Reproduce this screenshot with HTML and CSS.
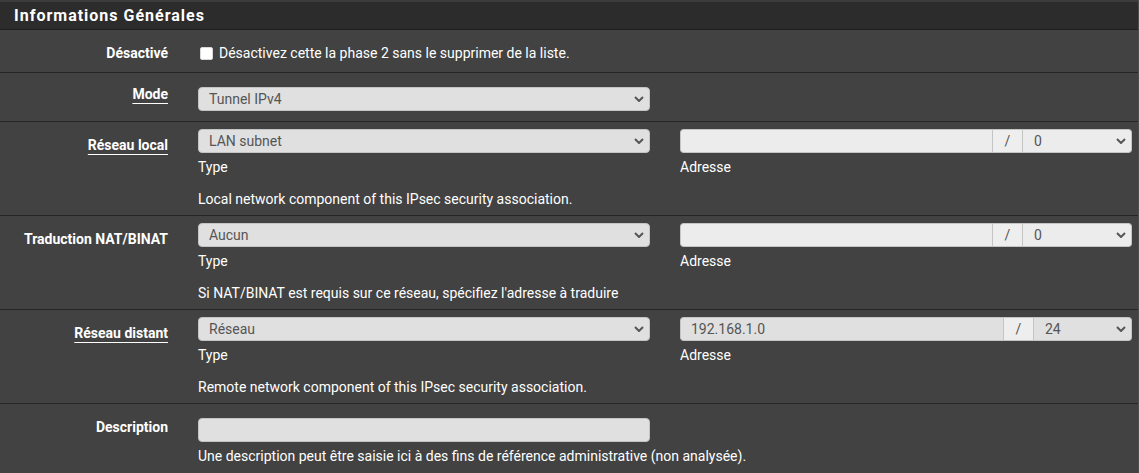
FILE: index.html
```html
<!DOCTYPE html>
<html lang="fr">
<head>
<meta charset="utf-8">
<title>Phase 2</title>
<link rel="stylesheet" href="styles.css">
</head>
<body>
<div class="panel">
  <div class="panel-heading">Informations Générales</div>
  <div class="panel-body">

    <div class="row row-check">
      <div class="lbl">Désactivé</div>
      <div class="ctl ctl-wide">
        <label class="checkline"><input type="checkbox" class="cb"> Désactivez cette la phase 2 sans le supprimer de la liste.</label>
      </div>
    </div>

    <div class="row row-simple">
      <div class="lbl"><span class="ul">Mode</span></div>
      <div class="ctl">
        <div class="sel"><span class="sel-text">Tunnel IPv4</span><svg class="chev" width="10" height="6" viewBox="0 0 10 6"><path d="M1 1l4 4 4-4" fill="none" stroke="#555" stroke-width="2"/></svg></div>
      </div>
    </div>

    <div class="row row-net">
      <div class="lbl"><span class="ul">Réseau local</span></div>
      <div class="ctl">
        <div class="sel"><span class="sel-text">LAN subnet</span><svg class="chev" width="10" height="6" viewBox="0 0 10 6"><path d="M1 1l4 4 4-4" fill="none" stroke="#555" stroke-width="2"/></svg></div>
        <div class="sub">Type</div>
        <div class="help">Local network component of this IPsec security association.</div>
      </div>
      <div class="ctl ctl-addr">
        <div class="igroup">
          <div class="inp inp-dis"></div>
          <div class="addon">/</div>
          <div class="sel sel-mask sel-dis"><span class="sel-text">0</span><svg class="chev" width="10" height="6" viewBox="0 0 10 6"><path d="M1 1l4 4 4-4" fill="none" stroke="#555" stroke-width="2"/></svg></div>
        </div>
        <div class="sub">Adresse</div>
      </div>
    </div>

    <div class="row row-net">
      <div class="lbl lbl-plain">Traduction NAT/BINAT</div>
      <div class="ctl">
        <div class="sel"><span class="sel-text">Aucun</span><svg class="chev" width="10" height="6" viewBox="0 0 10 6"><path d="M1 1l4 4 4-4" fill="none" stroke="#555" stroke-width="2"/></svg></div>
        <div class="sub">Type</div>
        <div class="help">Si NAT/BINAT est requis sur ce réseau, spécifiez l'adresse à traduire</div>
      </div>
      <div class="ctl ctl-addr">
        <div class="igroup">
          <div class="inp inp-dis"></div>
          <div class="addon">/</div>
          <div class="sel sel-mask sel-dis"><span class="sel-text">0</span><svg class="chev" width="10" height="6" viewBox="0 0 10 6"><path d="M1 1l4 4 4-4" fill="none" stroke="#555" stroke-width="2"/></svg></div>
        </div>
        <div class="sub">Adresse</div>
      </div>
    </div>

    <div class="row row-net">
      <div class="lbl"><span class="ul">Réseau distant</span></div>
      <div class="ctl">
        <div class="sel"><span class="sel-text">Réseau</span><svg class="chev" width="10" height="6" viewBox="0 0 10 6"><path d="M1 1l4 4 4-4" fill="none" stroke="#555" stroke-width="2"/></svg></div>
        <div class="sub">Type</div>
        <div class="help">Remote network component of this IPsec security association.</div>
      </div>
      <div class="ctl ctl-addr">
        <div class="igroup">
          <div class="inp"><span class="inp-text">192.168.1.0</span></div>
          <div class="addon">/</div>
          <div class="sel sel-mask sel-mask-sm"><span class="sel-text">24</span><svg class="chev" width="10" height="6" viewBox="0 0 10 6"><path d="M1 1l4 4 4-4" fill="none" stroke="#555" stroke-width="2"/></svg></div>
        </div>
        <div class="sub">Adresse</div>
      </div>
    </div>

    <div class="row row-desc">
      <div class="lbl lbl-plain">Description</div>
      <div class="ctl ctl-wide">
        <div class="inp inp-desc"></div>
        <div class="help help-desc">Une description peut être saisie ici à des fins de référence administrative (non analysée).</div>
      </div>
    </div>

  </div>
</div>
</body>
</html>
```

FILE: styles.css
```css
* { box-sizing: border-box; }
html, body { margin: 0; padding: 0; }
body {
  background: #424242;
  font-family: Roboto, "Liberation Sans", sans-serif;
  font-size: 14px;
  color: #fff;
  overflow: hidden;
}
.panel {
  width: 1139px;
  border-right: 1px solid #4e4e4e;
}
.panel-heading {
  height: 30px;
  background: #2c2c2c;
  border-top: 2px solid #3c3c3c;
  border-bottom: 1px solid #1f1f1f;
  padding-left: 14px;
  font-size: 16px;
  font-weight: 700;
  letter-spacing: 1px;
  line-height: 27px;
  color: #fff;
}
.row {
  display: grid;
  grid-template-columns: 183px 482px 1fr;
  align-items: start;
  border-bottom: 1px solid #262626;
  line-height: 20px;
}
.lbl {
  text-align: right;
  padding-right: 15px;
  font-weight: 700;
}
.ul {
  text-decoration: underline;
  text-underline-offset: 4px;
  text-decoration-thickness: 1px;
}
.ctl { padding: 0 15px; }
.ctl-wide { grid-column: 2 / 4; }
.ctl-addr { padding-right: 6px; }

/* rows */
.row-check { padding: 13px 0 9px; }
.row-simple { padding-bottom: 10px; }
.row-simple .lbl { padding-top: 11px; }
.row-simple .ctl { padding-top: 14px; }
.row-net { padding-bottom: 5px; }
.row-net .lbl { padding-top: 13px; }
.row-net .ctl { padding-top: 7px; }
.row-net .help { margin-bottom: 1px; }
.row-desc { padding-bottom: 20px; border-bottom: 0; }
.row-desc .lbl { padding-top: 13px; }
.row-desc .ctl { padding-top: 14px; }

.checkline { display: flex; align-items: center; gap: 6px; }
.cb {
  appearance: none;
  -webkit-appearance: none;
  width: 13px;
  height: 13px;
  margin: 0 0 0 2px;
  background: #fff;
  border: 1px solid #d8d8d8;
  border-radius: 2px;
}

/* select-like controls */
.sel {
  height: 24px;
  display: flex;
  align-items: center;
  justify-content: space-between;
  background: #e0e0e0;
  border: 1px solid #c4c4c4;
  border-radius: 4px;
  padding: 0 5px 0 10px;
  color: #555;
  font-size: 14px;
}
.sel-dis { background: #ececec; }
.chev { flex: none; }

.sub { margin-top: 4px; }
.help { margin-top: 12px; }
.help-desc { margin-top: 4px; }

.igroup { display: flex; height: 24px; }
.inp {
  height: 24px;
  background: #e0e0e0;
  border: 1px solid #c4c4c4;
  border-radius: 4px;
  color: #555;
  padding: 0 10px;
  display: flex;
  align-items: center;
}
.igroup .inp { flex: 1; border-radius: 4px 0 0 4px; border-right: 0; }
.inp-dis { background: #ececec; }
.addon {
  width: 31px;
  flex: none;
  background: #eee;
  border: 1px solid #c4c4c4;
  color: #555;
  text-align: center;
  line-height: 22px;
}
.igroup .sel-mask {
  width: 109px;
  flex: none;
  border-left: 0;
  border-radius: 0 4px 4px 0;
  padding-left: 11px;
}
.igroup .sel-mask-sm { width: 98px; }
.inp-desc { width: 452px; }
```
